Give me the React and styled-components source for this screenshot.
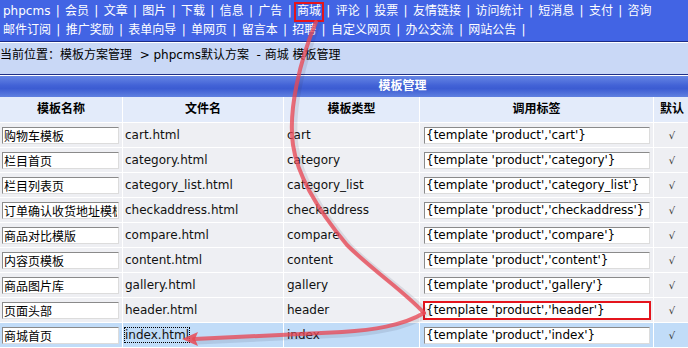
import React from "react";
import styled, { createGlobalStyle, css } from "styled-components";

const GlobalStyle = createGlobalStyle`
  html, body { margin: 0; padding: 0; }
  body {
    font-family: "DejaVu Sans", "Noto Sans CJK SC", sans-serif;
    font-size: 12px;
    background: #ffffff;
    overflow: hidden;
  }
`;

const FONT = `"DejaVu Sans", "Noto Sans CJK SC", sans-serif`;

const Page = styled.div`
  position: relative;
  width: 688px;
  height: 348px;
  overflow: hidden;
  background: #ffffff;
`;

const Nav = styled.div`
  height: 39px;
  padding: 2px 0 0 3px;
  background: #4264e4;
  border-bottom: 1px solid #1b2b86;
  color: #ffffff;
`;

const NavRow = styled.div`
  display: flex;
  height: 19px;
  line-height: 19px;
  white-space: nowrap;
`;

const NavItem = styled.span`
  position: relative;
  ${(p) =>
    p.$marked &&
    css`
      &::after {
        content: "";
        position: absolute;
        left: -3px;
        right: -3px;
        top: 0;
        bottom: -1px;
        border: 2px solid #e4141c;
      }
    `}
`;

const Sep = styled.span`
  margin: 0 5.3px;
`;

const Breadcrumb = styled.div`
  box-sizing: border-box;
  height: 33px;
  padding-top: 4px;
  line-height: 16px;
  background: #c9d8f6;
  border-top: 1px solid #ffffff;
  border-bottom: 1px solid #1f2f88;
  color: #000000;
  white-space: pre;
`;

const Table = styled.div`
  width: 805px;
`;

const Title = styled.div`
  height: 21px;
  line-height: 21px;
  border-top: 1px solid #ffffff;
  background: linear-gradient(#6686e4 0%, #4262d6 45%, #3c5cd2 60%, #5f80e0 100%);
  color: #ffffff;
  font-weight: bold;
  text-align: center;
`;

const Grid = styled.div`
  display: grid;
  grid-template-columns: 122px 160px 135px 233px 36px 114px;
  gap: 1px;
  background: #ffffff;
`;

const HeadCell = styled.div`
  height: 25px;
  line-height: 25px;
  background: #e3ebfa;
  font-weight: bold;
  text-align: center;
  color: #000000;
`;

const Cell = styled.div`
  height: 24px;
  display: flex;
  align-items: center;
  justify-content: ${(p) => (p.$center ? "center" : "flex-start")};
  padding-left: ${(p) => (p.$center ? "0" : `${p.$pad ?? 2}px`)};
  background: ${(p) => (p.$selected ? "#c1dcf8" : "#eeeff3")};
  color: #111111;
  white-space: nowrap;
  overflow: hidden;
`;

const TextInput = styled.input`
  box-sizing: border-box;
  width: ${(p) => p.$w}px;
  height: 17px;
  padding: 0 1px;
  margin: 0;
  border: 1px solid;
  border-color: #8a8a8a #dcdcdc #dcdcdc #8a8a8a;
  background: #ffffff;
  font-family: ${FONT};
  font-size: 12px;
  color: #000000;
  line-height: 15px;
  ${(p) =>
    p.$marked &&
    css`
      outline: 2px solid #e4141c;
      outline-offset: -1px;
    `}
`;

const Focused = styled.span`
  outline: 1px dotted #000000;
  outline-offset: 0;
`;

const Check = styled.span`
  font-size: 10px;
  color: #333333;
`;

const Overlay = styled.svg`
  position: absolute;
  left: 0;
  top: 0;
  pointer-events: none;
`;

const nav1 = ["phpcms", "会员", "文章", "图片", "下载", "信息", "广告", "商城", "评论", "投票", "友情链接", "访问统计", "短消息", "支付", "咨询"];
const nav2 = ["邮件订阅", "推广奖励", "表单向导", "单网页", "留言本", "招聘", "自定义网页", "办公交流", "网站公告"];

const rows = [
  ["购物车模板", "cart"],
  ["栏目首页", "category"],
  ["栏目列表页", "category_list"],
  ["订单确认收货地址模板", "checkaddress"],
  ["商品对比模版", "compare"],
  ["内容页模板", "content"],
  ["商品图片库", "gallery"],
  ["页面头部", "header"],
  ["商城首页", "index"],
];

export default function App() {
  return (
    <>
      <GlobalStyle />
      <Page>
        <Nav>
          <NavRow>
            {nav1.map((t, i) => (
              <React.Fragment key={t}>
                {i > 0 && <Sep>|</Sep>}
                <NavItem $marked={t === "商城"}>{t}</NavItem>
              </React.Fragment>
            ))}
          </NavRow>
          <NavRow>
            {nav2.map((t) => (
              <React.Fragment key={t}>
                <NavItem>{t}</NavItem>
                <Sep>|</Sep>
              </React.Fragment>
            ))}
          </NavRow>
        </Nav>
        <Breadcrumb>{"当前位置：模板方案管理  > phpcms默认方案  - 商城 模板管理"}</Breadcrumb>
        <Table>
          <Title>模板管理</Title>
          <Grid>
            <HeadCell>模板名称</HeadCell>
            <HeadCell>文件名</HeadCell>
            <HeadCell>模板类型</HeadCell>
            <HeadCell>调用标签</HeadCell>
            <HeadCell>默认</HeadCell>
            <HeadCell />
            {rows.map(([name, key]) => {
              const sel = key === "index";
              return (
                <React.Fragment key={key}>
                  <Cell $selected={sel}>
                    <TextInput $w={117} defaultValue={name} />
                  </Cell>
                  <Cell $selected={sel}>
                    {sel ? <Focused>{key}.html</Focused> : `${key}.html`}
                  </Cell>
                  <Cell $selected={sel} $pad={3}>{key}</Cell>
                  <Cell $selected={sel} $pad={4}>
                    <TextInput
                      $w={226}
                      $marked={key === "header"}
                      defaultValue={`{template 'product','${key}'}`}
                    />
                  </Cell>
                  <Cell $selected={sel} $center>
                    <Check>√</Check>
                  </Cell>
                  <Cell $selected={sel} $center />
                </React.Fragment>
              );
            })}
          </Grid>
        </Table>
        <Overlay width="688" height="348" viewBox="0 0 688 348">
          <g fill="none" strokeLinecap="round" strokeLinejoin="round">
            <path
              d="M 316 22 C 300 60, 288 110, 293 145 C 298 180, 322 215, 347 245 C 372 270, 405 292, 426 313"
              stroke="rgba(60,60,90,0.12)"
              strokeWidth="5"
              transform="translate(3 1)"
            />
            <path
              d="M 424 313 C 402 326, 372 330, 342 332 L 196 339"
              stroke="rgba(60,60,90,0.12)"
              strokeWidth="5"
              transform="translate(1 3)"
            />
            <path
              d="M 316 22 C 300 60, 288 110, 293 145 C 298 180, 322 215, 347 245 C 372 270, 405 292, 424 313"
              stroke="rgba(232,72,84,0.78)"
              strokeWidth="4"
            />
            <path
              d="M 424 313 C 402 326, 372 330, 342 332 L 194 339"
              stroke="rgba(232,72,84,0.78)"
              strokeWidth="4"
            />
          </g>
          <polygon points="182,339 198,332 195,339 198,346" fill="rgba(232,72,84,0.85)" />
        </Overlay>
      </Page>
    </>
  );
}
